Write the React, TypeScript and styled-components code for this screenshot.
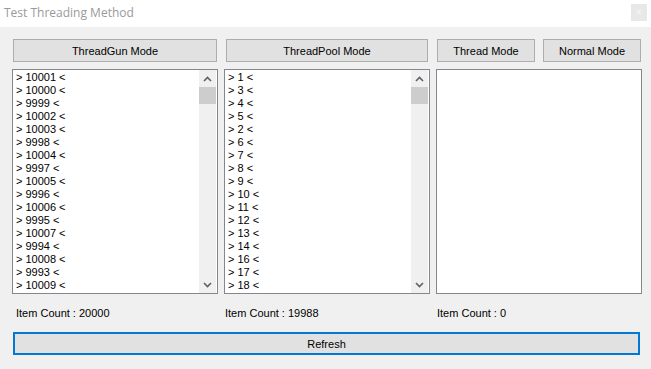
import React from 'react';
import styled, { createGlobalStyle } from 'styled-components';

const GlobalStyle = createGlobalStyle`
  html, body {
    margin: 0;
    padding: 0;
    background: #f0f0f0;
  }
  body {
    font-family: "Liberation Sans", Arial, sans-serif;
  }
`;

const Window = styled.div`
  width: 651px;
  height: 369px;
  background: #f0f0f0;
  display: flex;
  flex-direction: column;
  overflow: hidden;
`;

const TitleBar = styled.div`
  height: 27px;
  background: #ffffff;
  display: flex;
  align-items: center;
  justify-content: space-between;
  padding: 0 4px 0 4px;
  box-sizing: border-box;
`;

const Title = styled.span`
  font-family: "Open Sans", "Noto Sans", sans-serif;
  font-size: 12px;
  color: #9a9a9a;
  margin-top: -3px;
`;

const CloseBox = styled.div`
  width: 16px;
  height: 17px;
  background: #e8e8e8;
  color: #f8f8f8;
  font-size: 10px;
  display: flex;
  align-items: center;
  justify-content: center;
  margin-top: -2px;
`;

const Body = styled.div`
  padding: 12px 10px 0 12px;
  display: flex;
  flex-direction: column;
`;

const Columns = styled.div`
  display: grid;
  grid-template-columns: 206px 206px 206px;
  column-gap: 6px;
`;

const Column = styled.div`
  display: flex;
  flex-direction: column;
`;

const ButtonRow = styled.div<{ $left: number; $right: number }>`
  display: flex;
  gap: 8px;
  padding: 0 ${p => p.$right}px 0 ${p => p.$left}px;
  height: 23px;
  margin-bottom: 7px;
`;

const WinButton = styled.button`
  flex: 1;
  height: 23px;
  margin: 0;
  padding: 0;
  background: #e1e1e1;
  border: 1px solid #adadad;
  font-family: "Liberation Sans", Arial, sans-serif;
  font-size: 11px;
  color: #000;
  box-sizing: border-box;
`;

const ListBox = styled.div`
  height: 225px;
  border: 1px solid #828790;
  background: #ffffff;
  box-sizing: border-box;
  display: flex;
  overflow: hidden;
`;

const Items = styled.div`
  flex: 1;
  padding: 1px 0 0 3px;
  display: flex;
  flex-direction: column;
`;

const Item = styled.div`
  height: 13px;
  line-height: 13px;
  font-size: 11px;
  color: #000;
  white-space: nowrap;
`;

const ScrollBar = styled.div`
  width: 17px;
  margin: 0 1px 0 0;
  background: #f0f0f0;
  display: flex;
  flex-direction: column;
`;

const Arrow = styled.div`
  height: 17px;
  display: flex;
  align-items: center;
  justify-content: center;
`;

const Track = styled.div`
  flex: 1;
  display: flex;
  flex-direction: column;
`;

const Thumb = styled.div`
  height: 17px;
  background: #cdcdcd;
`;

const CountLabel = styled.div<{ $indent: number }>`
  font-size: 11px;
  color: #000;
  padding: 13px 0 0 ${p => p.$indent}px;
  height: 13px;
  line-height: 13px;
  white-space: nowrap;
`;

const RefreshButton = styled.button`
  margin: 12px 0 0 1px;
  width: 627px;
  height: 23px;
  background: #e1e1e1;
  border: 2px solid #0078d7;
  font-family: "Liberation Sans", Arial, sans-serif;
  font-size: 11px;
  color: #000;
  padding: 0;
  box-sizing: border-box;
`;

const Chevron: React.FC<{ down?: boolean }> = ({ down }) => (
  <svg width="9" height="6" viewBox="0 0 9 6">
    <polyline
      points={down ? '1,1 4.5,4.5 8,1' : '1,5 4.5,1.5 8,5'}
      fill="none"
      stroke="#606060"
      strokeWidth="1.6"
    />
  </svg>
);

const List: React.FC<{ items: number[] }> = ({ items }) => (
  <ListBox>
    <Items>
      {items.map((n, i) => (
        <Item key={i}>{`> ${n} <`}</Item>
      ))}
    </Items>
    {items.length > 0 && (
      <ScrollBar>
        <Arrow><Chevron /></Arrow>
        <Track><Thumb /></Track>
        <Arrow><Chevron down /></Arrow>
      </ScrollBar>
    )}
  </ListBox>
);

const gunItems = [10001, 10000, 9999, 10002, 10003, 9998, 10004, 9997, 10005, 9996, 10006, 9995, 10007, 9994, 10008, 9993, 10009];
const poolItems = [1, 3, 4, 5, 2, 6, 7, 8, 9, 10, 11, 12, 13, 14, 16, 17, 18];

export default function App() {
  return (
    <>
      <GlobalStyle />
      <Window>
        <TitleBar>
          <Title>Test Threading Method</Title>
          <CloseBox>×</CloseBox>
        </TitleBar>
        <Body>
          <Columns>
            <Column>
              <ButtonRow $left={1} $right={1}>
                <WinButton>ThreadGun Mode</WinButton>
              </ButtonRow>
              <List items={gunItems} />
              <CountLabel $indent={4}>Item Count : 20000</CountLabel>
            </Column>
            <Column>
              <ButtonRow $left={2} $right={2}>
                <WinButton>ThreadPool Mode</WinButton>
              </ButtonRow>
              <List items={poolItems} />
              <CountLabel $indent={1}>Item Count : 19988</CountLabel>
            </Column>
            <Column>
              <ButtonRow $left={1} $right={1}>
                <WinButton>Thread Mode</WinButton>
                <WinButton>Normal Mode</WinButton>
              </ButtonRow>
              <List items={[]} />
              <CountLabel $indent={1}>Item Count : 0</CountLabel>
            </Column>
          </Columns>
          <RefreshButton>Refresh</RefreshButton>
        </Body>
      </Window>
    </>
  );
}
